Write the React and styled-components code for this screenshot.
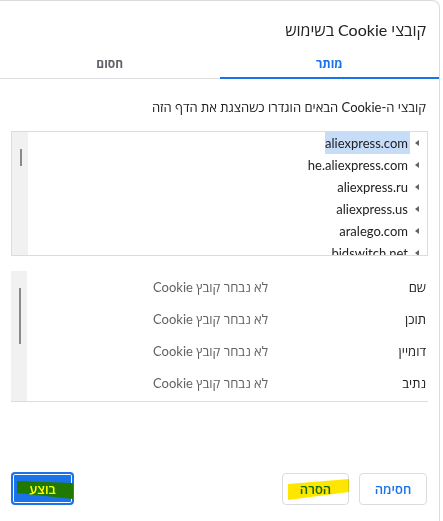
import React from "react";
import styled, { createGlobalStyle } from "styled-components";

const Global = createGlobalStyle`
  html, body { margin: 0; padding: 0; background: #ffffff; }
  body { font-family: "Lato", "Open Sans", "Liberation Sans", sans-serif; color: #202124; }
  * { box-sizing: border-box; }
`;

const Dialog = styled.div`
  direction: rtl;
  width: 441px;
  height: 530px;
  margin-left: -1px;
  border-top: 1px solid #dadce0;
  border-right: 1px solid #dadce0;
  border-left: 1px solid #dadce0;
  border-top-right-radius: 8px;
  background: #fff;
  display: flex;
  flex-direction: column;
`;

const Title = styled.h1`
  margin: 0;
  padding: 19px 13px 0 0;
  font-size: 16px;
  font-weight: 400;
  line-height: 20px;
  color: #202124;
`;

const Tabs = styled.div`
  display: grid;
  grid-template-columns: 1fr 1fr;
  margin-top: 7px;
  border-bottom: 1px solid #dadce0;
`;

const Tab = styled.div`
  height: 32px;
  display: flex;
  align-items: center;
  justify-content: center;
  font-size: 12px;
  font-weight: 700;
  color: ${(p) => (p.$active ? "#1a73e8" : "#5f6368")};
  box-shadow: ${(p) => (p.$active ? "inset 0 -2px 0 #1a73e8" : "none")};
  margin-bottom: -1px;
`;

const Body = styled.div`
  padding: 0 11px 0 11px;
  display: flex;
  flex-direction: column;
`;

const Description = styled.p`
  margin: 18px 2px 0 0;
  font-size: 13px;
  line-height: 20px;
  color: #202124;
`;

const TreeBox = styled.div`
  margin-top: 14px;
  height: 125px;
  border: 1px solid #dadce0;
  display: flex;
  overflow: hidden;
`;

const List = styled.div`
  flex: 1;
  display: flex;
  flex-direction: column;
`;

const Scroll = styled.div`
  width: 16px;
  flex: none;
  background: #f1f1f1;
  position: relative;
`;

const Thumb = styled.div`
  position: absolute;
  left: 8px;
  width: 2px;
  background: #8a8a8a;
  top: ${(p) => p.$top}px;
  height: ${(p) => p.$h}px;
`;

const TreeRow = styled.div`
  height: 22px;
  flex: none;
  display: flex;
  align-items: center;
  gap: 5px;
  padding-right: 8px;
  font-size: 13px;
  color: #202124;
`;

const Arrow = styled.span`
  width: 0;
  height: 0;
  border-top: 3.5px solid transparent;
  border-bottom: 3.5px solid transparent;
  border-right: 4px solid #5f6368;
`;

const Host = styled.span`
  height: 22px;
  line-height: 22px;
  padding: 0 2px 0 0;
  background: ${(p) => (p.$selected ? "#c6dcf7" : "transparent")};
`;

const Details = styled.div`
  margin-top: 15px;
  height: 131px;
  border-bottom: 1px solid #dadce0;
  display: flex;
`;

const DetailRows = styled.div`
  flex: 1;
  display: flex;
  flex-direction: column;
`;

const DetailRow = styled.div`
  height: 32px;
  display: grid;
  grid-template-columns: 158px 1fr;
  align-items: center;
  font-size: 13px;
  padding-right: 2px;
`;

const Label = styled.span`
  color: #202124;
`;

const Value = styled.span`
  color: #5f6368;
`;

const Footer = styled.div`
  margin-top: auto;
  padding: 0 12px 25px 11px;
  display: flex;
  align-items: center;
  gap: 10px;
`;

const Button = styled.button`
  font-family: inherit;
  height: 32px;
  min-width: ${(p) => p.$w}px;
  padding: 0 12px;
  border: 1px solid #dadce0;
  border-radius: 4px;
  background: #fff;
  color: #1a73e8;
  font-size: 13px;
  font-weight: 600;
  display: flex;
  align-items: center;
  justify-content: center;
  position: relative;
`;

const Primary = styled(Button)`
  margin-right: auto;
  height: 33px;
  min-width: 63px;
  background: #1a73e8;
  border: 2px solid #1a73e8;
  box-shadow: inset 0 0 0 1px #ffffff;
  color: #ffff00;
`;

const Marker = styled.svg`
  position: absolute;
  left: 0;
  top: 0;
  pointer-events: none;
  mix-blend-mode: ${(p) => p.$blend || "normal"};
`;

const ButtonText = styled.span`
  position: relative;
`;

const hosts = [
  "aliexpress.com",
  "he.aliexpress.com",
  "aliexpress.ru",
  "aliexpress.us",
  "aralego.com",
  "bidswitch.net",
];

const fields = ["שם", "תוכן", "דומיין", "נתיב"];

export default function App() {
  return (
    <>
      <Global />
      <Dialog>
        <Title>קובצי Cookie בשימוש</Title>
        <Tabs>
          <Tab $active>מותר</Tab>
          <Tab>חסום</Tab>
        </Tabs>
        <Body>
          <Description>קובצי ה-Cookie הבאים הוגדרו כשהצגת את הדף הזה</Description>
          <TreeBox>
            <List>
              {hosts.map((h, i) => (
                <TreeRow key={h}>
                  <Arrow />
                  <Host $selected={i === 0}>{h}</Host>
                </TreeRow>
              ))}
            </List>
            <Scroll>
              <Thumb $top={17} $h={17} />
            </Scroll>
          </TreeBox>
          <Details>
            <DetailRows>
              {fields.map((f) => (
                <DetailRow key={f}>
                  <Label>{f}</Label>
                  <Value>לא נבחר קובץ Cookie</Value>
                </DetailRow>
              ))}
            </DetailRows>
            <Scroll>
              <Thumb $top={17} $h={56} />
            </Scroll>
          </Details>
        </Body>
        <Footer>
          <Button $w={68}>חסימה</Button>
          <Button $w={67}>
            הסרה
            <Marker width="67" height="32" $blend="multiply">
              <polygon points="5,10 66,5 66,18 5,26" fill="#ffe600" />
            </Marker>
          </Button>
          <Primary>
            <Marker width="63" height="33">
              <polygon points="4,7 60,9 60,25 4,19" fill="#217a00" />
            </Marker>
            <ButtonText>בוצע</ButtonText>
          </Primary>
        </Footer>
      </Dialog>
    </>
  );
}
